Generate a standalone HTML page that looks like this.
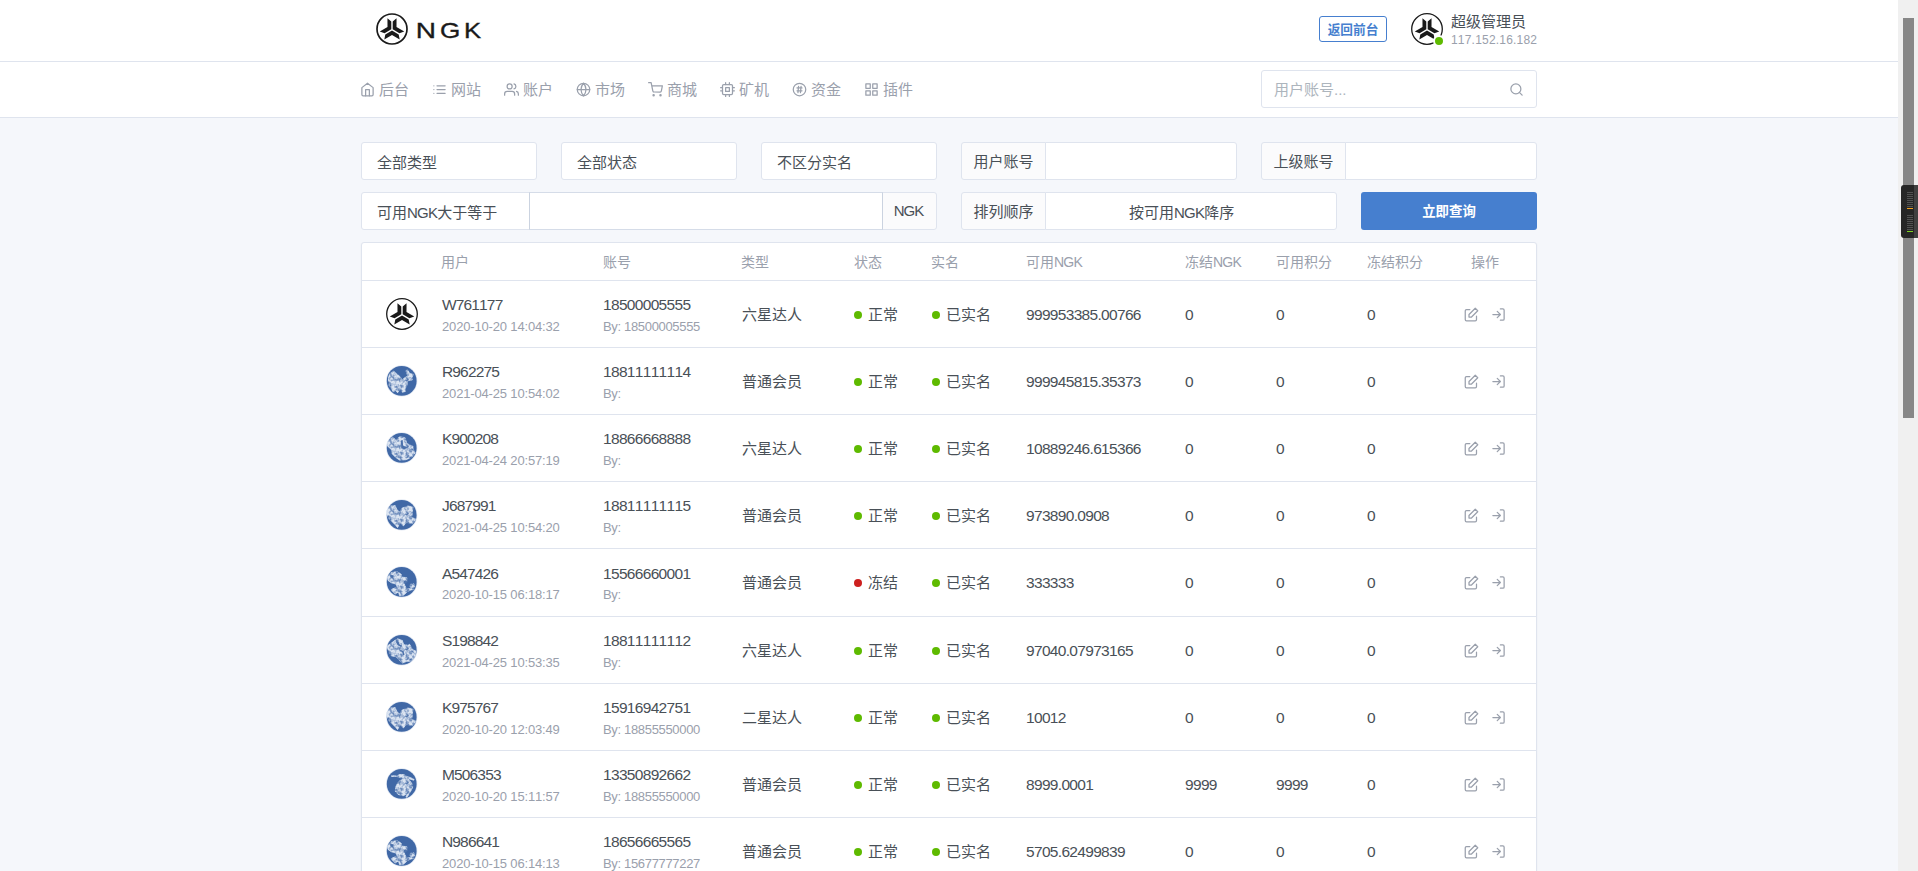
<!DOCTYPE html>
<html lang="zh-CN">
<head>
<meta charset="utf-8">
<title>NGK</title>
<style>
*{box-sizing:border-box;margin:0;padding:0}
html,body{width:1918px;height:871px;overflow:hidden}
body{font-kerning:none;font-family:"Liberation Sans","Noto Sans CJK SC",sans-serif;font-size:15px;line-height:1.5;color:#495057;background:#f5f7fb;position:relative}
.abs{position:absolute}
.page{position:absolute;left:0;top:0;width:1898px;height:871px;overflow:hidden}
.header{position:absolute;left:0;top:0;width:1898px;height:62px;background:#fff;border-bottom:1px solid #dfe4ee}
.navbar{position:absolute;left:0;top:62px;width:1898px;height:56px;background:#fff;border-bottom:1px solid #dfe4ee}
.muted{color:#9aa0ac}
/* scrollbar */
.sb{position:absolute;left:1898px;top:0;width:20px;height:871px;background:#f0f0f0}
.sb .thumb{position:absolute;left:5px;top:18px;width:11px;height:400px;background:#878787}
.widget{position:absolute;left:1901px;top:185px;width:17px;height:53px;background:#262626;border-radius:3px 0 0 3px}
/* header bits */
.btn-back{position:absolute;left:1319px;top:16px;width:68px;height:26px;border:1px solid #467fcf;border-radius:3px;color:#467fcf;font-size:12.7px;font-weight:700;line-height:24px;padding-top:1px;text-align:center;background:#fff}
.uname{position:absolute;left:1451px;top:11px;font-size:15px;line-height:22px;color:#495057;white-space:nowrap}
.uip{position:absolute;left:1451px;top:31px;letter-spacing:.2px;font-size:12px;line-height:18px;color:#9aa0ac;white-space:nowrap}
.status-dot{position:absolute;left:1433px;top:35px;width:12px;height:12px;border-radius:50%;background:#5eba00;border:2px solid #fff}
/* nav */
.nav-item{position:absolute;top:78px;height:22px;line-height:22px;color:#9aa0ac;font-size:15px;white-space:nowrap}
.nav-item svg{position:absolute;left:0;top:4px;width:15px;height:15px;stroke:#9aa0ac;fill:none;stroke-width:2;stroke-linecap:round;stroke-linejoin:round}
.nav-item span{position:absolute;left:19px;top:1px}
.search{position:absolute;left:1261px;top:70px;width:276px;height:38px;border:1px solid #dfe4ee;border-radius:3px;background:#fff;color:#adb5bd;font-size:15px;line-height:36px;padding-top:1px;padding-left:12px}
/* form */
.fc{position:absolute;height:38px;border:1px solid #dfe4ee;background:#fff;border-radius:3px;font-size:15px;line-height:37px;padding-top:1px;padding-left:15px;color:#495057;white-space:nowrap}
.addon{position:absolute;height:38px;border:1px solid #dfe4ee;background:#fbfbfc;border-radius:3px;font-size:15px;line-height:36px;padding-top:1px;text-align:center;color:#495057;white-space:nowrap}
.btn-q{position:absolute;left:1361px;top:192px;width:176px;height:38px;background:#467fcf;border-radius:3px;color:#fff;font-size:13.4px;font-weight:700;line-height:38px;padding-top:1px;text-align:center}
/* table */
.card{position:absolute;left:361px;top:242px;width:1176px;height:700px;background:#fff;border:1px solid #dfe4ee;border-radius:3px;box-shadow:0 1px 2px 0 rgba(0,0,0,.05)}
.th{position:absolute;top:0;height:37px;line-height:39px;font-size:14px;color:#9aa0ac;white-space:nowrap}
.row{position:absolute;left:0;width:1174px;height:67px;border-top:1px solid #dfe4ee}
.row .c{position:absolute;top:1px;height:66px;line-height:66px;white-space:nowrap;font-size:15px}
.row .t1{position:absolute;top:13px;line-height:22px;font-size:15px;white-space:nowrap}
.row .t2{position:absolute;top:36px;line-height:20px;font-size:13px;color:#9aa0ac;white-space:nowrap}
.dot{display:inline-block;width:8px;height:8px;border-radius:50%;background:#5eba00;margin-right:6px;vertical-align:middle;position:relative;top:-1px}
.dot.red{background:#cd201f}
.av{position:absolute;left:24px;top:17px;width:32px;height:32px}
.ic{position:absolute;top:26px;width:15px;height:15px;stroke:#9aa0ac;fill:none;stroke-width:2;stroke-linecap:round;stroke-linejoin:round}
.sicon{position:absolute;left:247px;top:11px;width:15px;height:15px;stroke:#9aa0ac;fill:none;stroke-width:2;stroke-linecap:round;stroke-linejoin:round}
.widget i{position:absolute;left:6px;width:6px;height:1px;background:#525252}.widget i.o{background:#f0a020}.widget i.g{background:#7ed321}.widget b{position:absolute;left:13px;top:0;width:4px;height:53px;background:#414141}
.n{letter-spacing:-.68px;font-size:15.5px!important}.nm{letter-spacing:-.85px;font-size:15.5px!important}.dt{letter-spacing:-.16px}.by{letter-spacing:-.33px}
.k{letter-spacing:-.75px}
</style>
</head>
<body>
<div class="page">
<svg width="0" height="0" style="position:absolute"><defs><filter id="ns" x="0" y="0" width="1" height="1" color-interpolation-filters="sRGB"><feTurbulence type="fractalNoise" baseFrequency="0.3" numOctaves="2" seed="7" result="n"/><feColorMatrix in="n" type="matrix" values="0 0 0 0 1 0 0 0 0 1 0 0 0 0 1 2.4 0 0 0 -0.45" result="a"/><feComposite in="SourceGraphic" in2="a" operator="in"/></filter></defs></svg>
<div class="header">
<svg class="abs" style="left:376px;top:13px" width="32" height="32" viewBox="0 0 32 32"><circle cx="16" cy="16" r="15" fill="#fff" stroke="#1a1a1a" stroke-width="1.7"/><g fill="#1a1a1a"><polygon points="16.00,17.50 22.70,21.40 23.70,26.40 16.00,21.90 8.30,26.40 9.30,21.40"/><polygon points="15.31,16.30 8.58,20.15 3.75,18.52 11.50,14.10 11.45,5.18 15.28,8.55"/><polygon points="16.69,16.30 16.72,8.55 20.55,5.18 20.50,14.10 28.25,18.52 23.42,20.15"/></g></svg>
<svg class="abs" style="left:412px;top:16px" width="80" height="28" viewBox="0 0 80 28"><g font-family="Liberation Sans, sans-serif" font-size="21.4" fill="#1a1a1a" stroke="#1a1a1a" stroke-width="0.35"><text transform="translate(3.8,22.1) scale(1.31,1)">N</text><text transform="translate(28.1,22.1) scale(1.22,1)">G</text><text transform="translate(51.9,22.1) scale(1.2,1)">K</text></g></svg>
<div class="btn-back">返回前台</div>
<svg class="abs" style="left:1411px;top:13px" width="32" height="32" viewBox="0 0 32 32"><circle cx="16" cy="16" r="15.3" fill="#fff" stroke="#1a1a1a" stroke-width="1.3"/><g fill="#1a1a1a"><polygon points="16.00,17.50 22.70,21.40 23.70,26.40 16.00,21.90 8.30,26.40 9.30,21.40"/><polygon points="15.31,16.30 8.58,20.15 3.75,18.52 11.50,14.10 11.45,5.18 15.28,8.55"/><polygon points="16.69,16.30 16.72,8.55 20.55,5.18 20.50,14.10 28.25,18.52 23.42,20.15"/></g></svg>
<div class="status-dot"></div>
<div class="uname">超级管理员</div>
<div class="uip">117.152.16.182</div>
</div>
<div class="navbar"></div>
<div class="nav-item" style="left:360px"><svg class="" style="" viewBox="0 0 24 24"><path d="M3 9l9-7 9 7v11a2 2 0 0 1-2 2H5a2 2 0 0 1-2-2z"/><path d="M9 22V12h6v10"/></svg><span>后台</span></div>
<div class="nav-item" style="left:432px"><svg class="" style="" viewBox="0 0 24 24"><path d="M8 6h13M8 12h13M8 18h13M3 6h.01M3 12h.01M3 18h.01"/></svg><span>网站</span></div>
<div class="nav-item" style="left:504px"><svg class="" style="" viewBox="0 0 24 24"><path d="M17 21v-2a4 4 0 0 0-4-4H5a4 4 0 0 0-4 4v2"/><circle cx="9" cy="7" r="4"/><path d="M23 21v-2a4 4 0 0 0-3-3.87M16 3.13a4 4 0 0 1 0 7.75"/></svg><span>账户</span></div>
<div class="nav-item" style="left:576px"><svg class="" style="" viewBox="0 0 24 24"><circle cx="12" cy="12" r="10"/><path d="M2 12h20M12 2a15.3 15.3 0 0 1 4 10 15.3 15.3 0 0 1-4 10 15.3 15.3 0 0 1-4-10 15.3 15.3 0 0 1 4-10z"/></svg><span>市场</span></div>
<div class="nav-item" style="left:648px"><svg class="" style="" viewBox="0 0 24 24"><circle cx="9" cy="21" r="1"/><circle cx="20" cy="21" r="1"/><path d="M1 1h4l2.68 13.39a2 2 0 0 0 2 1.61h9.72a2 2 0 0 0 2-1.61L23 6H6"/></svg><span>商城</span></div>
<div class="nav-item" style="left:720px"><svg class="" style="" viewBox="0 0 24 24"><rect x="4" y="4" width="16" height="16" rx="2"/><rect x="9" y="9" width="6" height="6"/><path d="M9 1v3M15 1v3M9 20v3M15 20v3M20 9h3M20 14h3M1 9h3M1 14h3"/></svg><span>矿机</span></div>
<div class="nav-item" style="left:792px"><svg class="" style="" viewBox="0 0 24 24"><circle cx="12" cy="12" r="10"/><path d="M8 9.5h8M8 14h8M10.5 7l-1 10M14.5 7l-1 10"/></svg><span>资金</span></div>
<div class="nav-item" style="left:864px"><svg class="" style="" viewBox="0 0 24 24"><rect x="3" y="3" width="7" height="7"/><rect x="14" y="3" width="7" height="7"/><rect x="14" y="14" width="7" height="7"/><rect x="3" y="14" width="7" height="7"/></svg><span>插件</span></div>
<div class="search">用户账号...<svg class="sicon" style="" viewBox="0 0 24 24"><circle cx="11" cy="11" r="8"/><path d="M21 21l-4.35-4.35"/></svg></div>
<div class="fc" style="left:361px;top:142px;width:176px">全部类型</div>
<div class="fc" style="left:561px;top:142px;width:176px">全部状态</div>
<div class="fc" style="left:761px;top:142px;width:176px">不区分实名</div>
<div class="addon" style="left:961px;top:142px;width:85px;border-radius:3px 0 0 3px">用户账号</div>
<div class="fc" style="left:1045px;top:142px;width:192px;border-radius:0 3px 3px 0"></div>
<div class="addon" style="left:1261px;top:142px;width:85px;border-radius:3px 0 0 3px">上级账号</div>
<div class="fc" style="left:1345px;top:142px;width:192px;border-radius:0 3px 3px 0"></div>
<div class="fc" style="left:361px;top:192px;width:169px;border-radius:3px 0 0 3px">可用<span class="k">NGK</span>大于等于</div>
<div class="fc" style="left:529px;top:192px;width:354px;border-radius:0;border-color:#d5dce8 #cbd3e0;z-index:2"></div>
<div class="addon" style="left:882px;top:192px;width:55px;border-radius:0 3px 3px 0;letter-spacing:-1px;padding:0 2px 0 0">NGK</div>
<div class="addon" style="left:961px;top:192px;width:85px;border-radius:3px 0 0 3px">排列顺序</div>
<div class="fc" style="left:1045px;top:192px;width:292px;border-radius:0 3px 3px 0;padding-left:83px">按可用<span class="k">NGK</span>降序</div>
<div class="btn-q">立即查询</div>
<div class="card">
<div class="th" style="left:79px">用户</div>
<div class="th" style="left:241px">账号</div>
<div class="th" style="left:379px">类型</div>
<div class="th" style="left:492px">状态</div>
<div class="th" style="left:569px">实名</div>
<div class="th" style="left:664px">可用<span class="k">NGK</span></div>
<div class="th" style="left:823px">冻结<span class="k">NGK</span></div>
<div class="th" style="left:914px">可用积分</div>
<div class="th" style="left:1005px">冻结积分</div>
<div class="th" style="left:1109px">操作</div>
<div class="row" style="top:37px;height:67px">
<svg class="av" style="" width="32" height="32" viewBox="0 0 32 32"><circle cx="16" cy="16" r="15.3" fill="#fff" stroke="#1a1a1a" stroke-width="1.3"/><g fill="#1a1a1a"><polygon points="16.00,17.50 22.70,21.40 23.70,26.40 16.00,21.90 8.30,26.40 9.30,21.40"/><polygon points="15.31,16.30 8.58,20.15 3.75,18.52 11.50,14.10 11.45,5.18 15.28,8.55"/><polygon points="16.69,16.30 16.72,8.55 20.55,5.18 20.50,14.10 28.25,18.52 23.42,20.15"/></g></svg>
<div class="t1 nm" style="left:80px">W761177</div><div class="t2 dt" style="left:80px">2020-10-20 14:04:32</div>
<div class="t1 n" style="left:241px">18500005555</div><div class="t2 by" style="left:241px">By: 18500005555</div>
<div class="c" style="left:380px">六星达人</div>
<div class="c" style="left:492px"><i class="dot"></i>正常</div>
<div class="c" style="left:570px"><i class="dot"></i>已实名</div>
<div class="c n" style="left:664px">999953385.00766</div>
<div class="c n" style="left:823px">0</div>
<div class="c n" style="left:914px">0</div>
<div class="c n" style="left:1005px">0</div>
<svg class="ic" style="left:1102px" viewBox="0 0 24 24"><path d="M20 14.66V20a2 2 0 0 1-2 2H4a2 2 0 0 1-2-2V6a2 2 0 0 1 2-2h5.34"/><path d="M18 2l4 4-10 10H8v-4z"/></svg>
<svg class="ic" style="left:1129px" viewBox="0 0 24 24"><path d="M15 3h4a2 2 0 0 1 2 2v14a2 2 0 0 1-2 2h-4"/><path d="M10 17l5-5-5-5M15 12H3"/></svg>
</div>
<div class="row" style="top:104px;height:67px">
<svg class="av" viewBox="0 0 32 32"><circle cx="15.7" cy="15.9" r="15.7" fill="#e3e9f3"/><circle cx="15.7" cy="15.9" r="14.9" fill="#4068a6"/><g filter="url(#ns)"><polygon points="2.0,14.5 3.8,8.5 7.5,6.2 11.2,8.9 14.4,12.2 16.2,14.9 19.0,12.6 21.7,10.8 19.9,5.7 21.7,4.8 23.6,8.5 27.7,9.4 25.9,12.2 26.3,14.9 21.7,15.8 20.8,20.9 19.0,24.6 19.4,26.4 16.2,27.3 15.7,24.6 13.0,25.5 11.6,27.8 9.8,25.5 7.0,26.9 6.1,24.6 3.3,20.9 2.9,17.7" fill="#dbe4f1" stroke="#dbe4f1" stroke-width="0.8" stroke-linejoin="round"/></g></svg>
<div class="t1 nm" style="left:80px">R962275</div><div class="t2 dt" style="left:80px">2021-04-25 10:54:02</div>
<div class="t1 n" style="left:241px">18811111114</div><div class="t2 by" style="left:241px">By:</div>
<div class="c" style="left:380px">普通会员</div>
<div class="c" style="left:492px"><i class="dot"></i>正常</div>
<div class="c" style="left:570px"><i class="dot"></i>已实名</div>
<div class="c n" style="left:664px">999945815.35373</div>
<div class="c n" style="left:823px">0</div>
<div class="c n" style="left:914px">0</div>
<div class="c n" style="left:1005px">0</div>
<svg class="ic" style="left:1102px" viewBox="0 0 24 24"><path d="M20 14.66V20a2 2 0 0 1-2 2H4a2 2 0 0 1-2-2V6a2 2 0 0 1 2-2h5.34"/><path d="M18 2l4 4-10 10H8v-4z"/></svg>
<svg class="ic" style="left:1129px" viewBox="0 0 24 24"><path d="M15 3h4a2 2 0 0 1 2 2v14a2 2 0 0 1-2 2h-4"/><path d="M10 17l5-5-5-5M15 12H3"/></svg>
</div>
<div class="row" style="top:171px;height:67px">
<svg class="av" viewBox="0 0 32 32"><circle cx="15.7" cy="15.9" r="15.7" fill="#e3e9f3"/><circle cx="15.7" cy="15.9" r="14.9" fill="#4068a6"/><g filter="url(#ns)"><polygon points="1.1,9.8 6.6,5.2 9.8,7.9 13.5,4.7 19.0,5.6 20.8,11.2 23.6,13.0 26.8,13.9 27.2,17.6 29.1,20.8 25.4,25.4 19.9,27.7 13.5,28.1 9.8,25.4 6.1,21.7 5.6,18.0 1.5,13.9" fill="#dbe4f1" stroke="#dbe4f1" stroke-width="0.8" stroke-linejoin="round"/></g><polygon points="14.8,8.4 16.7,7.9 17.1,13.5 20.8,15.3 19.0,17.6 15.3,16.2" fill="#4a70ab"/></svg>
<div class="t1 nm" style="left:80px">K900208</div><div class="t2 dt" style="left:80px">2021-04-24 20:57:19</div>
<div class="t1 n" style="left:241px">18866668888</div><div class="t2 by" style="left:241px">By:</div>
<div class="c" style="left:380px">六星达人</div>
<div class="c" style="left:492px"><i class="dot"></i>正常</div>
<div class="c" style="left:570px"><i class="dot"></i>已实名</div>
<div class="c n" style="left:664px">10889246.615366</div>
<div class="c n" style="left:823px">0</div>
<div class="c n" style="left:914px">0</div>
<div class="c n" style="left:1005px">0</div>
<svg class="ic" style="left:1102px" viewBox="0 0 24 24"><path d="M20 14.66V20a2 2 0 0 1-2 2H4a2 2 0 0 1-2-2V6a2 2 0 0 1 2-2h5.34"/><path d="M18 2l4 4-10 10H8v-4z"/></svg>
<svg class="ic" style="left:1129px" viewBox="0 0 24 24"><path d="M15 3h4a2 2 0 0 1 2 2v14a2 2 0 0 1-2 2h-4"/><path d="M10 17l5-5-5-5M15 12H3"/></svg>
</div>
<div class="row" style="top:238px;height:67px">
<svg class="av" viewBox="0 0 32 32"><circle cx="15.7" cy="15.9" r="15.7" fill="#e3e9f3"/><circle cx="15.7" cy="15.9" r="14.9" fill="#4068a6"/><g filter="url(#ns)"><polygon points="0.6,12.1 4.3,7.0 9.3,6.6 11.2,11.2 14.4,13.5 15.7,9.3 21.7,7.0 27.2,7.9 26.3,12.5 25.9,18.0 30.0,20.3 26.3,24.5 19.9,23.6 17.6,26.8 13.9,24.0 11.6,28.6 7.9,24.5 3.3,19.9 1.1,16.2" fill="#dbe4f1" stroke="#dbe4f1" stroke-width="0.8" stroke-linejoin="round"/></g></svg>
<div class="t1 nm" style="left:80px">J687991</div><div class="t2 dt" style="left:80px">2021-04-25 10:54:20</div>
<div class="t1 n" style="left:241px">18811111115</div><div class="t2 by" style="left:241px">By:</div>
<div class="c" style="left:380px">普通会员</div>
<div class="c" style="left:492px"><i class="dot"></i>正常</div>
<div class="c" style="left:570px"><i class="dot"></i>已实名</div>
<div class="c n" style="left:664px">973890.0908</div>
<div class="c n" style="left:823px">0</div>
<div class="c n" style="left:914px">0</div>
<div class="c n" style="left:1005px">0</div>
<svg class="ic" style="left:1102px" viewBox="0 0 24 24"><path d="M20 14.66V20a2 2 0 0 1-2 2H4a2 2 0 0 1-2-2V6a2 2 0 0 1 2-2h5.34"/><path d="M18 2l4 4-10 10H8v-4z"/></svg>
<svg class="ic" style="left:1129px" viewBox="0 0 24 24"><path d="M15 3h4a2 2 0 0 1 2 2v14a2 2 0 0 1-2 2h-4"/><path d="M10 17l5-5-5-5M15 12H3"/></svg>
</div>
<div class="row" style="top:305px;height:68px">
<svg class="av" viewBox="0 0 32 32"><circle cx="15.7" cy="15.9" r="15.7" fill="#e3e9f3"/><circle cx="15.7" cy="15.9" r="14.9" fill="#4068a6"/><g filter="url(#ns)"><polygon points="1.5,11.2 5.2,6.6 11.2,5.6 15.3,8.4 15.7,11.2 20.8,11.6 21.3,15.3 18.0,16.7 19.0,19.9 20.8,22.6 28.1,23.1 21.7,25.4 17.6,29.1 13.5,29.5 12.5,25.9 8.9,28.1 5.2,23.6 11.2,20.8 9.8,18.0 5.2,16.7 2.0,14.4" fill="#dbe4f1" stroke="#dbe4f1" stroke-width="0.8" stroke-linejoin="round"/><polygon points="24.5,18.0 27.7,17.6 28.6,20.8 25.4,22.2 24.0,20.3" fill="#dbe4f1" stroke="#dbe4f1" stroke-width="0.8" stroke-linejoin="round"/></g><polygon points="4.3,8.9 7.5,9.3 7.0,12.1 4.7,11.6" fill="#4a70ab"/><polygon points="17.6,14.8 19.9,14.4 19.9,17.6 18.5,18.0" fill="#4a70ab"/></svg>
<div class="t1 nm" style="left:80px;top:14px">A547426</div><div class="t2 dt" style="left:80px">2020-10-15 06:18:17</div>
<div class="t1 n" style="left:241px;top:14px">15566660001</div><div class="t2 by" style="left:241px">By:</div>
<div class="c" style="left:380px">普通会员</div>
<div class="c" style="left:492px"><i class="dot red"></i>冻结</div>
<div class="c" style="left:570px"><i class="dot"></i>已实名</div>
<div class="c n" style="left:664px">333333</div>
<div class="c n" style="left:823px">0</div>
<div class="c n" style="left:914px">0</div>
<div class="c n" style="left:1005px">0</div>
<svg class="ic" style="left:1102px" viewBox="0 0 24 24"><path d="M20 14.66V20a2 2 0 0 1-2 2H4a2 2 0 0 1-2-2V6a2 2 0 0 1 2-2h5.34"/><path d="M18 2l4 4-10 10H8v-4z"/></svg>
<svg class="ic" style="left:1129px" viewBox="0 0 24 24"><path d="M15 3h4a2 2 0 0 1 2 2v14a2 2 0 0 1-2 2h-4"/><path d="M10 17l5-5-5-5M15 12H3"/></svg>
</div>
<div class="row" style="top:373px;height:67px">
<svg class="av" viewBox="0 0 32 32"><circle cx="15.7" cy="15.9" r="15.7" fill="#e3e9f3"/><circle cx="15.7" cy="15.9" r="14.9" fill="#4068a6"/><g filter="url(#ns)"><polygon points="1.1,12.2 7.9,7.1 11.6,4.8 16.2,6.2 17.6,10.3 21.7,11.2 23.6,10.3 26.3,15.4 30.0,17.2 29.1,22.7 25.4,27.3 20.8,27.3 16.2,29.1 13.5,26.4 9.8,22.7 5.2,21.8 3.3,18.6 2.0,15.4" fill="#dbe4f1" stroke="#dbe4f1" stroke-width="0.8" stroke-linejoin="round"/></g><polygon points="9.8,7.6 12.1,7.1 13.5,10.3 16.2,11.7 15.3,13.1 11.6,11.2" fill="#4a70ab"/><polygon points="14.4,15.8 17.6,17.2 18.5,20.9 17.1,20.9 16.2,18.1 13.9,17.2" fill="#4a70ab"/></svg>
<div class="t1 nm" style="left:80px">S198842</div><div class="t2 dt" style="left:80px">2021-04-25 10:53:35</div>
<div class="t1 n" style="left:241px">18811111112</div><div class="t2 by" style="left:241px">By:</div>
<div class="c" style="left:380px">六星达人</div>
<div class="c" style="left:492px"><i class="dot"></i>正常</div>
<div class="c" style="left:570px"><i class="dot"></i>已实名</div>
<div class="c n" style="left:664px">97040.07973165</div>
<div class="c n" style="left:823px">0</div>
<div class="c n" style="left:914px">0</div>
<div class="c n" style="left:1005px">0</div>
<svg class="ic" style="left:1102px" viewBox="0 0 24 24"><path d="M20 14.66V20a2 2 0 0 1-2 2H4a2 2 0 0 1-2-2V6a2 2 0 0 1 2-2h5.34"/><path d="M18 2l4 4-10 10H8v-4z"/></svg>
<svg class="ic" style="left:1129px" viewBox="0 0 24 24"><path d="M15 3h4a2 2 0 0 1 2 2v14a2 2 0 0 1-2 2h-4"/><path d="M10 17l5-5-5-5M15 12H3"/></svg>
</div>
<div class="row" style="top:440px;height:67px">
<svg class="av" viewBox="0 0 32 32"><circle cx="15.7" cy="15.9" r="15.7" fill="#e3e9f3"/><circle cx="15.7" cy="15.9" r="14.9" fill="#4068a6"/><g filter="url(#ns)"><polygon points="0.6,12.1 4.3,7.0 9.3,6.6 11.2,11.2 14.4,13.5 15.7,9.3 21.7,7.0 27.2,7.9 26.3,12.5 25.9,18.0 30.0,20.3 26.3,24.5 19.9,23.6 17.6,26.8 13.9,24.0 11.6,28.6 7.9,24.5 3.3,19.9 1.1,16.2" fill="#dbe4f1" stroke="#dbe4f1" stroke-width="0.8" stroke-linejoin="round"/></g></svg>
<div class="t1 nm" style="left:80px">K975767</div><div class="t2 dt" style="left:80px">2020-10-20 12:03:49</div>
<div class="t1 n" style="left:241px">15916942751</div><div class="t2 by" style="left:241px">By: 18855550000</div>
<div class="c" style="left:380px">二星达人</div>
<div class="c" style="left:492px"><i class="dot"></i>正常</div>
<div class="c" style="left:570px"><i class="dot"></i>已实名</div>
<div class="c n" style="left:664px">10012</div>
<div class="c n" style="left:823px">0</div>
<div class="c n" style="left:914px">0</div>
<div class="c n" style="left:1005px">0</div>
<svg class="ic" style="left:1102px" viewBox="0 0 24 24"><path d="M20 14.66V20a2 2 0 0 1-2 2H4a2 2 0 0 1-2-2V6a2 2 0 0 1 2-2h5.34"/><path d="M18 2l4 4-10 10H8v-4z"/></svg>
<svg class="ic" style="left:1129px" viewBox="0 0 24 24"><path d="M15 3h4a2 2 0 0 1 2 2v14a2 2 0 0 1-2 2h-4"/><path d="M10 17l5-5-5-5M15 12H3"/></svg>
</div>
<div class="row" style="top:507px;height:67px">
<svg class="av" viewBox="0 0 32 32"><circle cx="15.7" cy="15.9" r="15.7" fill="#e3e9f3"/><circle cx="15.7" cy="15.9" r="14.9" fill="#4068a6"/><g filter="url(#ns)"><polygon points="11.2,7.8 13.5,6.2 17.6,6.2 20.3,8.0 28.1,11.2 27.7,12.2 21.7,10.3 25.4,14.5 26.8,19.0 24.5,23.6 20.8,29.6 19.9,29.1 21.7,25.5 17.1,27.8 12.1,26.4 9.3,23.2 9.8,18.6 12.1,14.0 16.2,11.2 19.9,10.3 14.4,9.6 10.7,8.5 5.2,8.5 5.2,7.8" fill="#dbe4f1" stroke="#dbe4f1" stroke-width="0.8" stroke-linejoin="round"/></g></svg>
<div class="t1 nm" style="left:80px">M506353</div><div class="t2 dt" style="left:80px">2020-10-20 15:11:57</div>
<div class="t1 n" style="left:241px">13350892662</div><div class="t2 by" style="left:241px">By: 18855550000</div>
<div class="c" style="left:380px">普通会员</div>
<div class="c" style="left:492px"><i class="dot"></i>正常</div>
<div class="c" style="left:570px"><i class="dot"></i>已实名</div>
<div class="c n" style="left:664px">8999.0001</div>
<div class="c n" style="left:823px">9999</div>
<div class="c n" style="left:914px">9999</div>
<div class="c n" style="left:1005px">0</div>
<svg class="ic" style="left:1102px" viewBox="0 0 24 24"><path d="M20 14.66V20a2 2 0 0 1-2 2H4a2 2 0 0 1-2-2V6a2 2 0 0 1 2-2h5.34"/><path d="M18 2l4 4-10 10H8v-4z"/></svg>
<svg class="ic" style="left:1129px" viewBox="0 0 24 24"><path d="M15 3h4a2 2 0 0 1 2 2v14a2 2 0 0 1-2 2h-4"/><path d="M10 17l5-5-5-5M15 12H3"/></svg>
</div>
<div class="row" style="top:574px;height:67px">
<svg class="av" viewBox="0 0 32 32"><circle cx="15.7" cy="15.9" r="15.7" fill="#e3e9f3"/><circle cx="15.7" cy="15.9" r="14.9" fill="#4068a6"/><g filter="url(#ns)"><polygon points="1.5,11.2 5.2,6.6 11.2,5.6 15.3,8.4 15.7,11.2 20.8,11.6 21.3,15.3 18.0,16.7 19.0,19.9 20.8,22.6 28.1,23.1 21.7,25.4 17.6,29.1 13.5,29.5 12.5,25.9 8.9,28.1 5.2,23.6 11.2,20.8 9.8,18.0 5.2,16.7 2.0,14.4" fill="#dbe4f1" stroke="#dbe4f1" stroke-width="0.8" stroke-linejoin="round"/><polygon points="24.5,18.0 27.7,17.6 28.6,20.8 25.4,22.2 24.0,20.3" fill="#dbe4f1" stroke="#dbe4f1" stroke-width="0.8" stroke-linejoin="round"/></g><polygon points="4.3,8.9 7.5,9.3 7.0,12.1 4.7,11.6" fill="#4a70ab"/><polygon points="17.6,14.8 19.9,14.4 19.9,17.6 18.5,18.0" fill="#4a70ab"/></svg>
<div class="t1 nm" style="left:80px">N986641</div><div class="t2 dt" style="left:80px">2020-10-15 06:14:13</div>
<div class="t1 n" style="left:241px">18656665565</div><div class="t2 by" style="left:241px">By: 15677777227</div>
<div class="c" style="left:380px">普通会员</div>
<div class="c" style="left:492px"><i class="dot"></i>正常</div>
<div class="c" style="left:570px"><i class="dot"></i>已实名</div>
<div class="c n" style="left:664px">5705.62499839</div>
<div class="c n" style="left:823px">0</div>
<div class="c n" style="left:914px">0</div>
<div class="c n" style="left:1005px">0</div>
<svg class="ic" style="left:1102px" viewBox="0 0 24 24"><path d="M20 14.66V20a2 2 0 0 1-2 2H4a2 2 0 0 1-2-2V6a2 2 0 0 1 2-2h5.34"/><path d="M18 2l4 4-10 10H8v-4z"/></svg>
<svg class="ic" style="left:1129px" viewBox="0 0 24 24"><path d="M15 3h4a2 2 0 0 1 2 2v14a2 2 0 0 1-2 2h-4"/><path d="M10 17l5-5-5-5M15 12H3"/></svg>
</div>
</div>
</div>
<div class="sb"><div class="thumb"></div></div>
<div class="widget"><b></b><i style="top:7px"></i><i style="top:9px"></i><i style="top:11px"></i><i style="top:13px"></i><i style="top:15px"></i><i style="top:17px"></i><i style="top:19px"></i><i style="top:21px"></i><i class="o" style="top:23px"></i><i style="top:30px"></i><i style="top:32px"></i><i style="top:34px"></i><i style="top:36px"></i><i style="top:38px"></i><i style="top:40px"></i><i style="top:42px"></i><i style="top:44px"></i><i class="g" style="top:46px"></i></div>
</body>
</html>
